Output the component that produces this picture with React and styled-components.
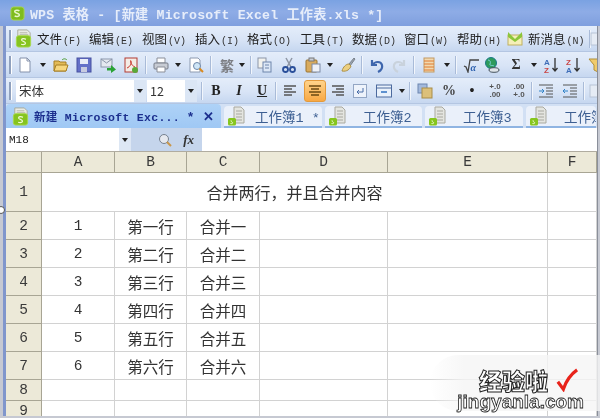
import React from "react";
import styled, { createGlobalStyle } from "styled-components";

const GlobalStyle = createGlobalStyle`
  html, body { margin: 0; padding: 0; background: #fff; }
  body { width: 600px; height: 418px; overflow: hidden; font-family: "Noto Sans CJK SC", "Liberation Sans", sans-serif; }
  svg { flex: none; }
`;

const MONO = `"Liberation Mono", "Noto Sans CJK SC", monospace`;

const Svg = ({ children, size = 16, vb = 16 }) => (
  <svg width={size} height={size} viewBox={`0 0 ${vb} ${vb}`} fill="none">{children}</svg>
);

const SLogo = ({ size = 16 }) => (
  <Svg size={size}>
    <rect x="1" y="1" width="14" height="14" rx="3" fill="#7fbc1e" stroke="#a9d653" />
    <path d="M5 10.500c1 1 5 1 5-1S5 8 5 5.800c0-1.600 4-1.600 5-.6" stroke="#e8f6c8" strokeWidth="1.600" />
  </Svg>
);

// 메뉴/탭 앞의 문서 모양 로고
const SheetLogo = ({ size = 20 }) => (
  <Svg size={size} vb={20}>
    <path d="M4 1h10l3 3v6H4z" fill="#e9ebe4" stroke="#a8aa9c" />
    <path d="M6 4h8M6 6h9" stroke="#b4b6a8" />
    <rect x="2.500" y="7" width="15" height="12" rx="2.500" fill="#86c41f" stroke="#a6d84a" />
    <path d="M7.500 16c2 .8 5 .4 4.500-1.300S7.500 13 8 11.300s3.500-1 4.500-.4" stroke="#eef8d4" strokeWidth="1.300" />
  </Svg>
);

const DocLogo = () => (
  <Svg size={20} vb={20}>
    <path d="M7 1h7l3 3v13H7z" fill="#e4e5e0" stroke="#a9a9a0" />
    <path d="M9 5h6M9 8h6M9 11h6M9 14h6" stroke="#a8a8a0" />
    <rect x="1" y="12" width="8" height="7.500" rx="1.500" fill="#86c61e" />
    <path d="M3.500 17.500c2 .5 2.800-.6 1.700-1.400s-2-.9-.8-1.800" stroke="#eef8d4" />
  </Svg>
);

const ICONS = {
  new: <><path d="M3 1h7l3 3v11H3z" fill="#fff" stroke="#8491ab" /><path d="M10 1v3h3" stroke="#8491ab" /></>,
  open: <><path d="M1 4h5l1 1h6v9H1z" fill="#e3bb58" stroke="#a67f24" /><path d="M3 8h12l-2 6H1z" fill="#f6d67e" stroke="#a67f24" /><path d="M9 3c2-2 4-1 5 0" stroke="#4c9c2e" /></>,
  save: <><rect x="1" y="1" width="14" height="14" fill="#6470c8" stroke="#4650a0" /><rect x="4" y="2" width="8" height="5" fill="#e8ecf8" /><rect x="5" y="10" width="6" height="5" fill="#c7cbe0" /></>,
  mail: <><rect x="1" y="2" width="11" height="8" fill="#e5e9f0" stroke="#8c97ab" /><path d="M1 2l5.500 4L12 2" stroke="#8c97ab" /><path d="M7 11h4V8l5 4.500L11 16v-2.500H7z" fill="#2aa336" /></>,
  pdf: <><rect x="2" y="1" width="12" height="14" fill="#f4ece6" stroke="#b23a32" /><path d="M4 11c3-1 5-5 4-7s-1 4 4 6" stroke="#c9352c" /><circle cx="12" cy="13" r="3" fill="#5aa838" /></>,
  print: <><path d="M4 1h8v5H4z" fill="#fff" stroke="#8b8f99" /><rect x="1" y="6" width="14" height="6" rx="1" fill="#c8ccd4" stroke="#777c88" /><path d="M4 10h8v5H4z" fill="#fff" stroke="#8b8f99" /></>,
  preview: <><path d="M2 1h8l2 2v12H2z" fill="#fff" stroke="#8d9ab0" /><circle cx="9" cy="9" r="3.500" fill="#cfe6f7" stroke="#6f88a8" /><path d="M11.500 11.500L15 15" stroke="#d98a1f" strokeWidth="2" /></>,
  copy: <><rect x="1" y="1" width="8" height="10" fill="#f2f2ee" stroke="#8b95a8" /><rect x="6" y="5" width="8" height="10" fill="#dce7f6" stroke="#6f86ac" /><path d="M8 8h4M8 11h4" stroke="#6f86ac" /></>,
  cut: <><path d="M5 1l5 9M11 1L6 10" stroke="#8f97a5" strokeWidth="1.500" /><circle cx="4.500" cy="12.500" r="2.500" stroke="#2a4f9a" strokeWidth="1.800" /><circle cx="11.500" cy="12.500" r="2.500" stroke="#2a4f9a" strokeWidth="1.800" /></>,
  paste: <><rect x="1" y="3" width="11" height="12" rx="1" fill="#d9ab5d" stroke="#9b7430" /><rect x="4" y="1" width="5" height="3" fill="#c9ced6" stroke="#777" /><rect x="7" y="7" width="8" height="8" fill="#eef1f7" stroke="#7c8aa5" /></>,
  brush: <><path d="M9 7l5-6 1 1-5 7z" fill="#9aa3ad" stroke="#7b838d" /><path d="M2 14c1-4 4-7 7-7l2 2c-1 3-4 6-9 5z" fill="#eccf80" stroke="#ad9148" /></>,
  undo: <path d="M3 3v5h5M3.500 8C6 4 12 4 13 8s-2 6-4 7" stroke="#3e66ad" strokeWidth="2.200" />,
  redo: <path d="M13 3v5H8M12.500 8C10 4 4 4 3 8s2 6 4 7" stroke="#c9d2dc" strokeWidth="2.200" />,
  col: <><rect x="3" y="1" width="10" height="14" fill="#f1d9b0" stroke="#c39a62" /><path d="M3 4h10M3 7h10M3 10h10M3 13h10" stroke="#e07b31" /></>,
  sqrt: <><path d="M1 9l2 1 2 5 2-12h9" stroke="#444" strokeWidth="1.300" /><text x="7.500" y="14" fontSize="10" fontStyle="italic" fontWeight="700" fill="#2b5fae" fontFamily="Liberation Serif">α</text></>,
  globe: <><circle cx="7" cy="6" r="5.500" fill="#2e9b5c" stroke="#1c7a87" /><path d="M4 3c2 0 3 2 2 4s3 1 4 2" stroke="#7ad0d8" /><ellipse cx="10" cy="13" rx="5" ry="2.300" fill="#dfe5ea" stroke="#45515c" /></>,
  sortAz: <><text x="1" y="7.500" fontSize="8" fontWeight="700" fill="#3e6db8" fontFamily="Liberation Sans">A</text><text x="1" y="15.500" fontSize="8" fontWeight="700" fill="#c94545" fontFamily="Liberation Sans">Z</text><path d="M12 1v12M9.500 11l2.500 3 2.500-3" stroke="#333" strokeWidth="1.300" /></>,
  sortZa: <><text x="1" y="7.500" fontSize="8" fontWeight="700" fill="#c94545" fontFamily="Liberation Sans">Z</text><text x="1" y="15.500" fontSize="8" fontWeight="700" fill="#3e6db8" fontFamily="Liberation Sans">A</text><path d="M12 1v12M9.500 11l2.500 3 2.500-3" stroke="#333" strokeWidth="1.300" /></>,
  filter: <path d="M1 2h14l-5 6v7l-4-2V8z" fill="#f0cb6c" stroke="#b08f3a" />,
  alignL: <path d="M2 3h12M2 6h8M2 9h12M2 12h8" stroke="#555" strokeWidth="1.500" />,
  alignC: <path d="M2 3h12M4 6h8M2 9h12M4 12h8" stroke="#6b4a12" strokeWidth="1.500" />,
  alignR: <path d="M2 3h12M6 6h8M2 9h12M6 12h8" stroke="#555" strokeWidth="1.500" />,
  wrap: <><rect x="1.500" y="1.500" width="13" height="13" fill="#eef3fb" stroke="#93a6c4" /><path d="M11 5v4H5M7 7L5 9l2 2" stroke="#4a6ea8" /></>,
  merge: <><rect x=".5" y="2" width="15" height="12" fill="#e9f1fb" stroke="#4c6a9e" /><path d="M1 5h15" stroke="#4c6a9e" /><path d="M5 9h6" stroke="#2f70c0" strokeWidth="1.500" /></>,
  style: <><rect x="1" y="1" width="9" height="9" fill="#a3b9dc" stroke="#6c86b0" /><rect x="5" y="5" width="10" height="10" fill="#dcc07a" stroke="#a98d48" /></>,
  inc: <><path d="M1 2h14M1 14h14" stroke="#555" /><path d="M8 5h7M8 8h7M8 11h7" stroke="#555" /><path d="M1 8h5M4 6l2 2-2 2" stroke="#2f82c8" /></>,
  dec: <><path d="M1 2h14M1 14h14" stroke="#555" /><path d="M8 5h7M8 8h7M8 11h7" stroke="#555" /><path d="M6 8H1M3 6L1 8l2 2" stroke="#2f82c8" /></>,
  box: <rect x="2" y="2" width="12" height="12" fill="#e6ecf5" stroke="#b8c4d6" />,
  envelope: <><rect x="1" y="4" width="14" height="10" fill="#f5efb8" stroke="#c0b060" /><path d="M1 1l7 7 7-7v5l-7 5-7-5z" fill="#8cc63a" /></>,
  find: <><circle cx="7" cy="7" r="4.500" fill="#e5e8ee" stroke="#75808f" /><path d="M10 10l4 4" stroke="#c9964a" strokeWidth="2" /></>,
};

const Icon = ({ name }) => <Svg>{ICONS[name]}</Svg>;

const T = (name, w = 24) => ({ type: "icon", name, w });
const A = (w = 12) => ({ type: "arrow", w });
const S = (w = 8) => ({ type: "sep", w });
const G = (text, w, color) => ({ type: "glyph", text, w, color });
const Gap = (w) => ({ type: "gap", w });

const MAIN_TOOLS = [
  T("new"), A(12), T("open"), T("save", 22), T("mail", 26), T("pdf", 20), S(10), T("print", 20), A(14), T("preview", 22), S(8),
  G("繁", 24), A(6), S(12), T("copy", 16), T("cut", 32), T("paste", 16), A(18), T("brush", 18), S(10),
  T("undo", 20), T("redo", 24), S(6), T("col", 24), A(12), S(6), T("sqrt", 24), T("globe", 18), G("Σ", 30, "#333"), A(6),
  T("sortAz", 28), T("sortZa", 16), T("filter", 30),
];

const FORMAT_TOOLS = [
  G("B", 22, "#222"), G("I", 24, "#222"), G("U", 22, "#222"), S(6), T("alignL", 22), Gap(3), { type: "active", name: "alignC", w: 22 },
  T("alignR", 24), T("wrap", 20), T("merge", 28), A(8), S(8), T("style", 22), G("%", 26, "#444"), G("•", 20, "#222"),
  { type: "small", top: "+.0", bottom: ".00", w: 26 }, { type: "small", top: ".00", bottom: "+.0", w: 22 }, S(4), T("inc", 24), T("dec", 24), S(4), T("box", 20),
];

const MENUS = [
  ["文件", "(F)", 52], ["编辑", "(E)", 53], ["视图", "(V)", 53], ["插入", "(I)", 52], ["格式", "(O)", 53],
  ["工具", "(T)", 52], ["数据", "(D)", 52], ["窗口", "(W)", 53], ["帮助", "(H)", 45],
];

const COLUMNS = ["A", "B", "C", "D", "E", "F"];

const ROWS = [
  ["1", "第一行", "合并一"], ["2", "第二行", "合并二"], ["3", "第三行", "合并三"],
  ["4", "第四行", "合并四"], ["5", "第五行", "合并五"], ["6", "第六行", "合并六"],
];

const Frame = styled.div`
  position: relative;
  width: 600px;
  height: 418px;
  overflow: hidden;
  display: flex;
  flex-direction: column;
  background: #c6c9d2;
  filter: blur(0.45px);
`;

const TitleBar = styled.div`
  height: 26px;
  flex: none;
  display: flex;
  align-items: center;
  gap: 5px;
  padding: 0 0 0 10px;
  background: linear-gradient(#7aa2e2, #8eace6 45%, #7f9fde);
`;

const TitleText = styled.span`
  font: bold 13.200px ${MONO};
  letter-spacing: 0.2px;
  color: #e6edfa;
  white-space: nowrap;
`;

const Body = styled.div`
  flex: 1;
  min-height: 0;
  margin: 0 2px 2px 3px;
  border-left: 3px solid #8096cc;
  border-right: 1px solid #8a8f9a;
  display: flex;
  flex-direction: column;
  background: #fff;
`;

const Bar = styled.div`
  height: ${(p) => p.$h}px;
  flex: none;
  display: flex;
  align-items: center;
  overflow: hidden;
  background: linear-gradient(#e4edfa, #d8e4f6 55%, #c6d7f0);
  border-bottom: 1px solid #b4c6e2;
  box-sizing: border-box;
`;

const Grip = styled.div`
  width: 2px;
  height: 18px;
  flex: none;
  margin: 0 ${(p) => p.$after}px 0 3px;
  background: #8fa0bd;
  border-right: 1px solid #fff;
`;

const MenuItem = styled.div`
  width: ${(p) => p.$w}px;
  flex: none;
  display: flex;
  align-items: baseline;
  font-size: 12.500px;
  color: #222;
  white-space: nowrap;
`;

const Hotkey = styled.span`
  font: 10px ${MONO};
  margin-left: 1px;
  color: #333;
`;

const Slot = styled.div`
  width: ${(p) => p.$w}px;
  height: 22px;
  flex: none;
  display: flex;
  align-items: center;
  justify-content: center;
  font: ${(p) => (p.$italic ? "italic " : "")}bold 14px "Liberation Serif", "Noto Sans CJK SC", serif;
  color: ${(p) => p.$color || "#7d7f84"};
  text-decoration: ${(p) => (p.$under ? "underline" : "none")};
`;

const ActiveSlot = styled(Slot)`
  background: linear-gradient(#ffd38a, #f8a844);
  border: 1px solid #e39a3c;
  border-radius: 3px;
  box-sizing: border-box;
`;

const Arrow = styled.div`
  width: 0;
  height: 0;
  border: 3px solid transparent;
  border-top: 4px solid #222;
  border-bottom: 0;
`;

const SepLine = styled.div`
  width: 1px;
  height: 18px;
  flex: none;
  background: #a9bbd8;
  border-right: 1px solid #f2f6fc;
`;

const SmallStack = styled.div`
  font: bold 8px/8px "Liberation Sans", sans-serif;
  color: #555;
  text-align: center;
`;

const Combo = styled.div`
  width: ${(p) => p.$w}px;
  height: 22px;
  flex: none;
  display: flex;
  align-items: center;
  background: #fff;
  font-size: 12.500px;
  color: #333;
  padding-left: 3px;
  box-sizing: border-box;
  margin-right: 1px;
`;

const ComboLabel = styled.span`
  flex: 1;
  white-space: nowrap;
`;

const ComboButton = styled.div`
  width: 12px;
  height: 100%;
  display: flex;
  align-items: center;
  justify-content: center;
  background: #dbe6f5;
`;

const TabStrip = styled.div`
  height: 24px;
  flex: none;
  display: flex;
  align-items: flex-end;
  gap: 3px;
  background: #d2e0f4;
  overflow: hidden;
`;

const Tab = styled.div`
  width: ${(p) => p.$w}px;
  height: ${(p) => (p.$active ? 24 : 22)}px;
  flex: none;
  display: flex;
  align-items: center;
  box-sizing: border-box;
  padding-left: ${(p) => (p.$active ? 5 : 3)}px;
  border-radius: 4px 4px 0 0;
  background: ${(p) => (p.$active ? "linear-gradient(#aed2f7, #9fc8f4)" : "#eaf0fa")};
  border-bottom: ${(p) => (p.$active ? "0" : "2px solid #8fb4e2")};
  white-space: nowrap;
  overflow: hidden;
`;

const TabTitle = styled.span`
  margin-left: ${(p) => p.$gap}px;
  font: ${(p) => (p.$active ? "bold 11.500px" : "13.500px")} ${MONO};
  letter-spacing: ${(p) => (p.$active ? "0.300px" : "0")};
  color: ${(p) => (p.$active ? "#1c2f8e" : "#3d5f92")};
`;

const TabMark = styled.span`
  margin-left: ${(p) => p.$gap}px;
  font: bold 13px "Liberation Sans", sans-serif;
  color: #1c2f8e;
`;

const FormulaBar = styled.div`
  height: 23px;
  flex: none;
  display: flex;
  align-items: center;
  background: #a9cdf4;
`;

const NameBox = styled.div`
  width: 125px;
  height: 100%;
  flex: none;
  display: flex;
  align-items: center;
  background: #fff;
  box-sizing: border-box;
  padding-left: 3px;
  font: 11px ${MONO};
  color: #222;
`;

const FormulaTools = styled.div`
  width: 71px;
  height: 100%;
  flex: none;
  display: flex;
  align-items: center;
  justify-content: flex-end;
  gap: 10px;
  padding-right: 8px;
  box-sizing: border-box;
  background: #c5d5ec;
  font: italic bold 13px "Liberation Serif", serif;
  color: #333;
`;

const NameArrow = styled.div`
  width: 12px;
  height: 100%;
  display: flex;
  align-items: center;
  justify-content: center;
  background: #dde7f4;
`;

const FormulaInput = styled.div`
  flex: 1;
  height: 100%;
  background: #fff;
`;

const Sheet = styled.div`
  flex: 1;
  min-height: 0;
  display: grid;
  grid-template-columns: 36px 73px 72px 73px 128px 160px 49px;
  grid-template-rows: 21px 39px repeat(6, 28px) 21px 20px;
  border-top: 1px solid #b0aca0;
  overflow: hidden;
`;

const Header = styled.div`
  display: flex;
  align-items: center;
  justify-content: center;
  background: #ece9d8;
  border-right: 1px solid #a8a594;
  border-bottom: 1px solid #a8a594;
  font: 14.500px/16px ${MONO};
  color: #3a3a3a;
`;

const Cell = styled.div`
  display: flex;
  align-items: center;
  justify-content: center;
  box-sizing: border-box;
  grid-column: ${(p) => (p.$span ? `span ${p.$span}` : "auto")};
  border-right: 1px solid #d2d2d2;
  border-bottom: 1px solid #d2d2d2;
  font-size: ${(p) => (p.$span ? 16 : 15.500)}px;
  color: #333;
  white-space: nowrap;
`;

const NumberText = styled.span`
  font: 14.500px ${MONO};
`;

const ResizeDot = styled.div`
  position: absolute;
  left: -3px;
  top: 206px;
  width: 6px;
  height: 6px;
  border: 1px solid #555;
  border-radius: 50%;
  background: #fff;
`;

const Watermark = styled.div`
  position: absolute;
  right: 0;
  bottom: 7px;
  width: 170px;
  height: 56px;
  display: flex;
  flex-direction: column;
  align-items: flex-end;
  justify-content: flex-end;
  padding-right: 16px;
  box-sizing: border-box;
  background: linear-gradient(90deg, rgba(246,246,246,0), rgba(245,245,245,0.8) 20%);
  border-radius: 30px 0 0 30px;
`;

const MarkRow = styled.div`
  display: flex;
  align-items: center;
  gap: 8px;
  margin-right: 6px;
`;

const MarkCn = styled.span`
  font: 900 23px/24px "Noto Sans CJK SC", sans-serif;
  color: #fff;
  -webkit-text-stroke: 1px #222;
`;

const MarkEn = styled.span`
  font: bold 19px/19px "Liberation Sans", sans-serif;
  color: #fff;
  -webkit-text-stroke: 0.8px #222;
`;

const Tool = ({ item }) => {
  if (item.type === "gap") return <Slot $w={item.w} />;
  if (item.type === "arrow") return <Slot $w={item.w}><Arrow /></Slot>;
  if (item.type === "sep") return <Slot $w={item.w}><SepLine /></Slot>;
  if (item.type === "active") return <ActiveSlot $w={item.w}><Icon name={item.name} /></ActiveSlot>;
  if (item.type === "small") {
    return <Slot $w={item.w}><SmallStack>{item.top}<br />{item.bottom}</SmallStack></Slot>;
  }
  if (item.type === "glyph") {
    return <Slot $w={item.w} $color={item.color} $italic={item.text === "I"} $under={item.text === "U"}>{item.text}</Slot>;
  }
  return <Slot $w={item.w}><Icon name={item.name} /></Slot>;
};

export default function App() {
  return (
    <Frame>
      <GlobalStyle />
      <TitleBar>
        <SLogo size={15} />
        <TitleText>WPS 表格 - [新建 Microsoft Excel 工作表.xls *]</TitleText>
      </TitleBar>
      <Body>
        <Bar $h={26}>
          <Grip $after={2} />
          <SheetLogo size={19} />
          <Slot $w={4} />
          {MENUS.map(([label, key, w]) => (
            <MenuItem key={label} $w={w}>{label}<Hotkey>{key}</Hotkey></MenuItem>
          ))}
          <Slot $w={26}><Icon name="envelope" /></Slot>
          <MenuItem $w={61}>新消息<Hotkey>(N)</Hotkey></MenuItem>
          <SepLine />
          <Slot $w={12}><Icon name="box" /></Slot>
        </Bar>
        <Bar $h={26}>
          <Grip $after={1} />
          {MAIN_TOOLS.map((item, i) => <Tool key={i} item={item} />)}
        </Bar>
        <Bar $h={26}>
          <Grip $after={4} />
          <Combo $w={130}><ComboLabel>宋体</ComboLabel><ComboButton><Arrow /></ComboButton></Combo>
          <Combo $w={50}><ComboLabel>12</ComboLabel><ComboButton><Arrow /></ComboButton></Combo>
          <Slot $w={7}><SepLine /></Slot>
          {FORMAT_TOOLS.map((item, i) => <Tool key={i} item={item} />)}
        </Bar>
        <TabStrip>
          <Tab $active $w={215}>
            <SheetLogo size={19} />
            <TabTitle $active $gap={4}>新建 Microsoft Exc...</TabTitle>
            <TabMark $gap={8}>*</TabMark>
            <TabMark $gap={10}>✕</TabMark>
          </Tab>
          <Tab $w={98}><DocLogo /><TabTitle $gap={8}>工作簿1 *</TabTitle></Tab>
          <Tab $w={97}><DocLogo /><TabTitle $gap={15}>工作簿2</TabTitle></Tab>
          <Tab $w={98}><DocLogo /><TabTitle $gap={15}>工作簿3</TabTitle></Tab>
          <Tab $w={70}><DocLogo /><TabTitle $gap={15}>工作簿4</TabTitle></Tab>
        </TabStrip>
        <FormulaBar>
          <NameBox><ComboLabel>M18</ComboLabel><NameArrow><Arrow /></NameArrow></NameBox>
          <FormulaTools><Icon name="find" /><span>fx</span></FormulaTools>
          <FormulaInput />
        </FormulaBar>
        <Sheet>
          <Header />
          {COLUMNS.map((c) => <Header key={c}>{c}</Header>)}
          <Header>1</Header>
          <Cell $span={5}>合并两行，并且合并内容</Cell>
          <Cell />
          {ROWS.map((row, i) => (
            <React.Fragment key={row[0]}>
              <Header>{i + 2}</Header>
              <Cell><NumberText>{row[0]}</NumberText></Cell>
              <Cell>{row[1]}</Cell>
              <Cell>{row[2]}</Cell>
              <Cell /><Cell /><Cell />
            </React.Fragment>
          ))}
          {[8, 9].map((n) => (
            <React.Fragment key={n}>
              <Header>{n}</Header>
              <Cell /><Cell /><Cell /><Cell /><Cell /><Cell />
            </React.Fragment>
          ))}
        </Sheet>
      </Body>
      <ResizeDot />
      <Watermark>
        <MarkRow>
          <MarkCn>经验啦</MarkCn>
          <svg width="22" height="24" viewBox="0 0 24 26" fill="none">
            <path d="M2 15l6 8C11 14 16 7 23 2" stroke="#e8231a" strokeWidth="3.500" />
          </svg>
        </MarkRow>
        <MarkEn>jingyanla.com</MarkEn>
      </Watermark>
    </Frame>
  );
}
